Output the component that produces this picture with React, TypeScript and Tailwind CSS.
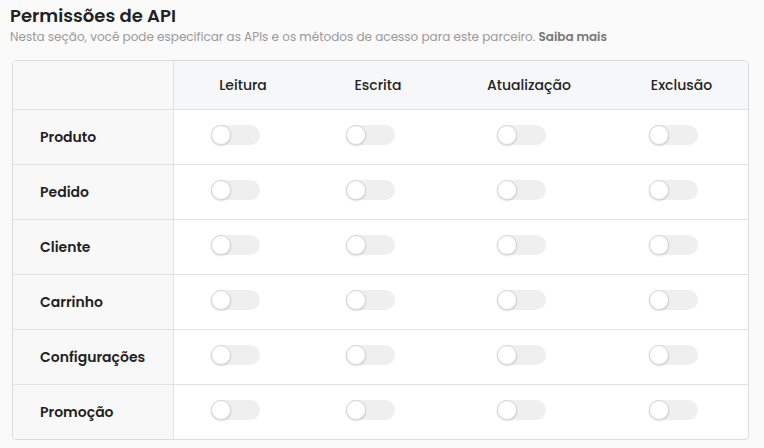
import { useState } from "react";

const resources = ["Produto", "Pedido", "Cliente", "Carrinho", "Configurações", "Promoção"];
const actions = ["Leitura", "Escrita", "Atualização", "Exclusão"];

const Toggle = ({ on, onClick }: { on: boolean; onClick: () => void }) => (
  <button
    onClick={onClick}
    className={
      "relative mb-[4px] mr-4 h-[20px] w-[49px] rounded-full " + (on ? "bg-green-500" : "bg-[#efefef]")
    }
  >
    <span
      className={
        "absolute top-0 h-[20px] w-[20px] rounded-full bg-white border border-[#d6d6d6] shadow-[0_1px_2px_rgba(0,0,0,0.15)] " +
        (on ? "left-[29px]" : "left-0")
      }
    />
  </button>
);

const App = () => {
  const [perms, setPerms] = useState<Record<string, boolean>>({});

  const toggle = (key: string) => {
    setPerms({ ...perms, [key]: !perms[key] });
  };

  return (
    <div className="min-h-[448px] w-[764px] bg-[#fafafa] px-[10px] pt-[3px] font-['Poppins','Open_Sans',sans-serif]">
      <h1 className="text-[18px] font-semibold leading-[26px] text-[#222]">Permissões de API</h1>
      <p className="text-[12px] leading-[15px] text-[#999]">
        Nesta seção, você pode especificar as APIs e os métodos de acesso para este parceiro.{" "}
        <span className="font-semibold text-[#777]">Saiba mais</span>
      </p>

      <div className="mt-[16px] ml-[2px] w-[737px] overflow-hidden rounded-[4px] border border-[#dcdcdc] bg-white">
        <div className="grid grid-cols-[161px_138px_132px_170px_135px] border-b border-[#e2e2e2]">
          <div className="h-[48px] border-r border-[#e2e2e2] bg-[#f8f8f8]" />
          {actions.map((a) => (
            <div
              key={a}
              className="flex h-[48px] items-center justify-center bg-[#f6f7f9] text-[14px] font-medium text-[#222]"
            >
              {a}
            </div>
          ))}
        </div>

        {resources.map((r, i) => (
          <div
            key={r}
            className={
              "grid grid-cols-[161px_138px_132px_170px_135px] " +
              (i < resources.length - 1 ? "border-b border-[#e2e2e2]" : "")
            }
          >
            <div className="flex h-[54px] items-center border-r border-[#e2e2e2] bg-[#f8f8f8] pl-[27px] text-[14px] font-semibold text-[#1f1f1f]">
              {r}
            </div>
            {actions.map((a) => (
              <div key={a} className="flex h-[54px] items-center justify-center">
                <Toggle on={!!perms[r + a]} onClick={() => toggle(r + a)} />
              </div>
            ))}
          </div>
        ))}
      </div>
    </div>
  );
};

export default App;
